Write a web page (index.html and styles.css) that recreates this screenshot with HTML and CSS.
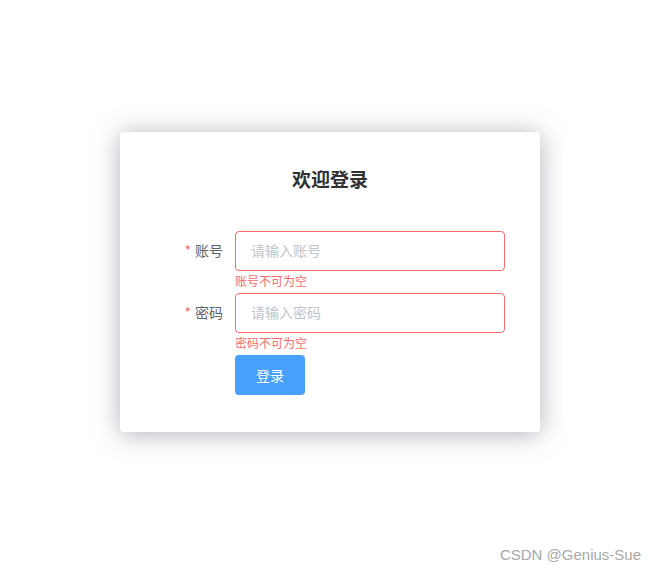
FILE: index.html
```html
<!DOCTYPE html>
<html lang="zh-CN">
<head>
<meta charset="utf-8">
<title>欢迎登录</title>
<link rel="stylesheet" href="styles.css">
</head>
<body>
<div class="page">
  <div class="card">
    <h3 class="title">欢迎登录</h3>
    <form class="form">
      <div class="item">
        <label class="label"><span class="star">*</span>账号</label>
        <div class="control">
          <input class="input is-error" type="text" placeholder="请输入账号">
          <div class="error">账号不可为空</div>
        </div>
      </div>
      <div class="item">
        <label class="label"><span class="star">*</span>密码</label>
        <div class="control">
          <input class="input is-error" type="password" placeholder="请输入密码">
          <div class="error">密码不可为空</div>
        </div>
      </div>
      <div class="item last">
        <div class="label"></div>
        <div class="control">
          <button class="btn" type="button">登录</button>
        </div>
      </div>
    </form>
  </div>
</div>
<div class="watermark">CSDN @Genius-Sue</div>
</body>
</html>
```
FILE: styles.css
```css
html, body {
  margin: 0;
  padding: 0;
  background: #fff;
  font-family: "Noto Sans CJK SC", "Noto Sans", "Liberation Sans", sans-serif;
}
.page {
  height: 569px;
  box-sizing: border-box;
  padding: 132px 0 0 120px;
}
.card {
  width: 420px;
  height: 300px;
  box-sizing: border-box;
  background: #fff;
  border-radius: 4px;
  box-shadow: 0 2px 26px rgba(110, 114, 132, 0.55);
  padding: 0 35px;
}
.title {
  margin: 0;
  padding-top: 34px;
  height: 26px;
  line-height: 26px;
  text-align: center;
  font-size: 19px;
  font-weight: 700;
  color: #303133;
}
.form {
  margin-top: 39px;
}
.item {
  display: flex;
  margin-bottom: 22px;
}
.item.last {
  margin-bottom: 0;
}
.label {
  width: 80px;
  flex: none;
  box-sizing: border-box;
  padding-right: 12px;
  text-align: right;
  font-size: 14px;
  line-height: 38px;
  color: #606266;
}
.star {
  color: #f56c6c;
  margin-right: 4px;
}
.control {
  position: relative;
  flex: 1;
}
.input {
  display: block;
  width: 100%;
  height: 40px;
  box-sizing: border-box;
  border: 1px solid #dcdfe6;
  border-radius: 4px;
  padding: 0 15px 2px;
  font-family: inherit;
  font-size: 14px;
  color: #606266;
  outline: none;
  background: #fff;
}
.input.is-error {
  border-color: #f56c6c;
}
.input::placeholder {
  color: #c0c4cc;
}
.error {
  position: absolute;
  top: 100%;
  left: 0;
  padding-top: 4px;
  font-size: 12px;
  line-height: 1;
  color: #f56c6c;
}
.btn {
  width: 70px;
  height: 40px;
  border: none;
  border-radius: 4px;
  background: #46a0fc;
  color: #fff;
  font-family: inherit;
  font-size: 14px;
  padding: 0;
}
.watermark {
  position: absolute;
  right: 15px;
  bottom: 6px;
  font-family: "Liberation Sans", Arial, sans-serif;
  font-size: 15px;
  color: #a8a8a8;
}
```
